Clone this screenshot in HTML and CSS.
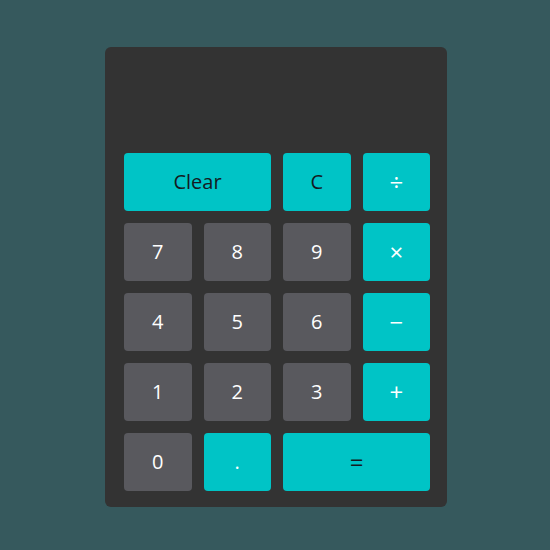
FILE: index.html
```html
<!DOCTYPE html>
<html>
<head>
<meta charset="utf-8">
<link rel="stylesheet" href="styles.css">
</head>
<body>
<div class="calc">
  <div class="display"></div>
  <div class="keys">
    <button class="key accent dark wide">Clear</button>
    <button class="key accent dark">C</button>
    <button class="key accent op">÷</button>
    <button class="key">7</button>
    <button class="key">8</button>
    <button class="key">9</button>
    <button class="key accent op">×</button>
    <button class="key">4</button>
    <button class="key">5</button>
    <button class="key">6</button>
    <button class="key accent op">−</button>
    <button class="key">1</button>
    <button class="key">2</button>
    <button class="key">3</button>
    <button class="key accent op">+</button>
    <button class="key">0</button>
    <button class="key accent">.</button>
    <button class="key accent dark wide op">=</button>
  </div>
</div>
</body>
</html>
```
FILE: styles.css
```css
html, body {
  margin: 0;
  padding: 0;
}
body {
  background: #36595d;
  width: 550px;
  height: 550px;
  font-family: "Open Sans", "DejaVu Sans", sans-serif;
}
.calc {
  margin: 47px 0 0 105px;
  width: 342px;
  height: 460px;
  box-sizing: border-box;
  background: #333333;
  border-radius: 6px;
  padding: 0 17px 17px 19px;
  display: flex;
  flex-direction: column;
}
.display {
  height: 106px;
  flex: none;
}
.keys {
  display: grid;
  grid-template-columns: repeat(4, 67.5px);
  grid-auto-rows: 58px;
  column-gap: 12px;
  row-gap: 12px;
}
.key {
  border: none;
  margin: 0;
  padding: 0;
  border-radius: 4px;
  background: #59595e;
  color: #ffffff;
  font-family: "Open Sans", "DejaVu Sans", sans-serif;
  font-size: 20px;
  line-height: 58px;
  text-align: center;
}
.accent {
  background: #00c4c6;
}
.dark {
  color: #141a22;
}
.op {
  font-size: 24px;
}
.wide {
  grid-column: span 2;
}
```
